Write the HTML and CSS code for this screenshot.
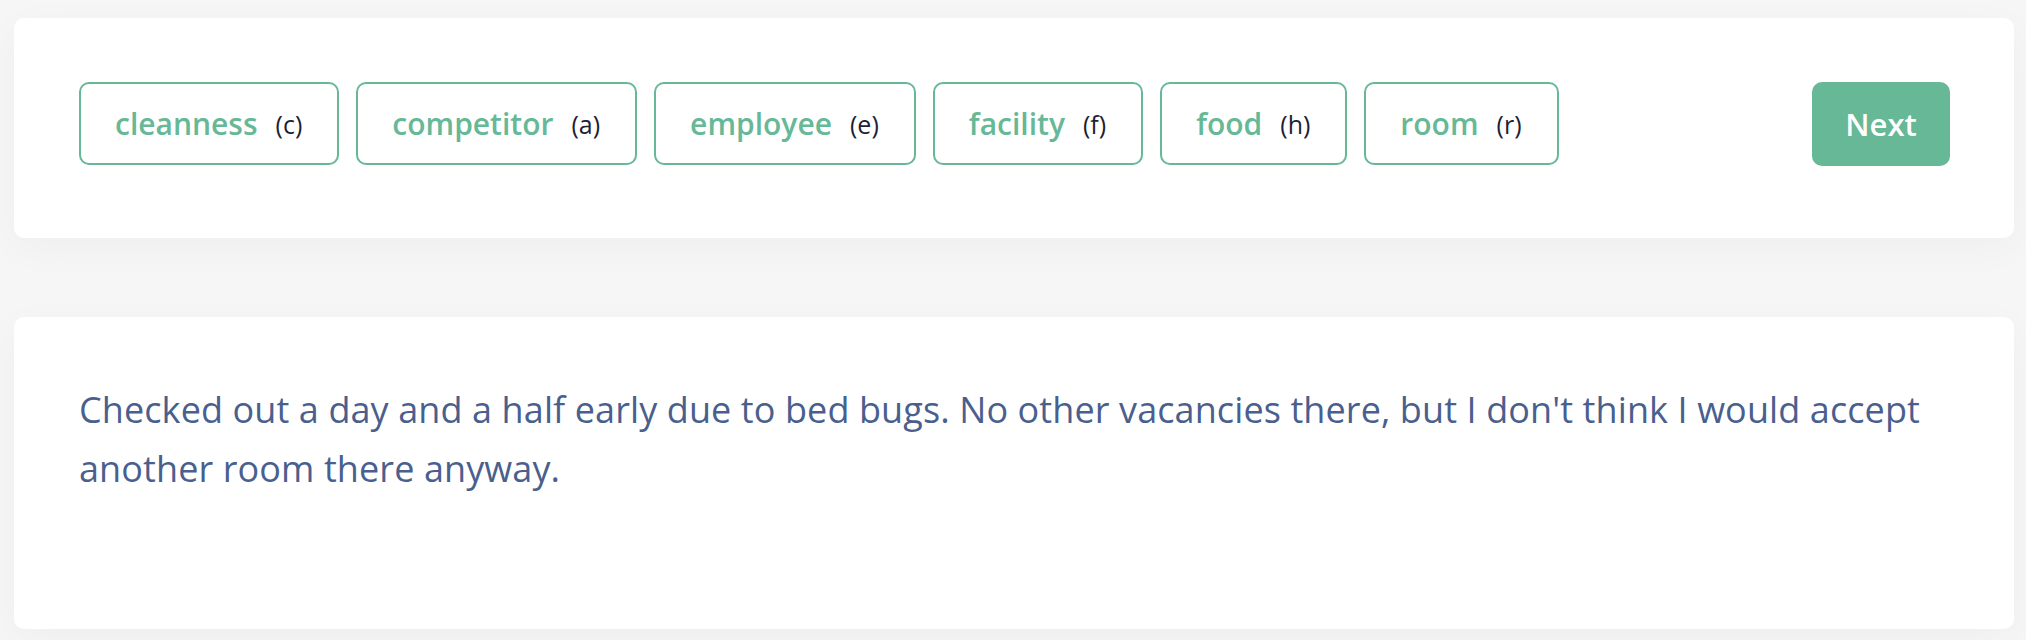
FILE: index.html
```html
<!DOCTYPE html>
<html lang="en">
<head>
<meta charset="utf-8">
<title>Labeler</title>
<link rel="stylesheet" href="styles.css">
</head>
<body>
<main class="page">
  <section class="card toolbar">
    <div class="tags">
      <button class="tag"><span class="tag-label">cleanness</span><span class="tag-key">(c)</span></button>
      <button class="tag"><span class="tag-label">competitor</span><span class="tag-key">(a)</span></button>
      <button class="tag"><span class="tag-label">employee</span><span class="tag-key">(e)</span></button>
      <button class="tag"><span class="tag-label">facility</span><span class="tag-key">(f)</span></button>
      <button class="tag"><span class="tag-label">food</span><span class="tag-key">(h)</span></button>
      <button class="tag"><span class="tag-label">room</span><span class="tag-key">(r)</span></button>
    </div>
    <button class="next">Next</button>
  </section>
  <section class="card review">
    <p class="review-text">Checked out a day and a half early due to bed bugs. No other vacancies there, but I don't think I would accept another room there anyway.</p>
  </section>
</main>
</body>
</html>
```
FILE: styles.css
```css
* { box-sizing: border-box; }
html, body { margin: 0; padding: 0; }
body {
  background: #f6f6f7;
  font-family: "Open Sans", "Liberation Sans", sans-serif;
  width: 2026px;
  height: 640px;
  overflow: hidden;
}
.page {
  padding: 18px 12px 0 14px;
  display: flex;
  flex-direction: column;
  gap: 79px;
}
.card {
  background: #ffffff;
  border-radius: 10px;
  box-shadow: 0 10px 40px rgba(0, 0, 0, 0.035);
}
.toolbar {
  height: 220px;
  padding: 64px 64px 0 65px;
  display: flex;
  align-items: flex-start;
  justify-content: space-between;
}
.tags {
  display: flex;
  gap: 17px;
}
.tag {
  height: 83px;
  padding: 0 35px 0 34px;
  border: 2px solid #66b896;
  border-radius: 10px;
  background: #ffffff;
  display: flex;
  align-items: center;
  gap: 18px;
  font-family: inherit;
  cursor: pointer;
}
.tag-label {
  color: #66b896;
  font-size: 30px;
  font-weight: 600;
}
.tag-key {
  color: #1c1f35;
  font-size: 25px;
  font-weight: 400;
}
.next {
  width: 138px;
  height: 84px;
  border: none;
  border-radius: 10px;
  background: #66b896;
  color: #ffffff;
  font-family: inherit;
  font-size: 31px;
  font-weight: 600;
  cursor: pointer;
}
.review {
  height: 312px;
  padding: 63px 64px 0 65px;
}
.review-text {
  margin: 0;
  color: #4a5f8e;
  font-size: 36px;
  letter-spacing: 0.1px;
  line-height: 59px;
}
```
